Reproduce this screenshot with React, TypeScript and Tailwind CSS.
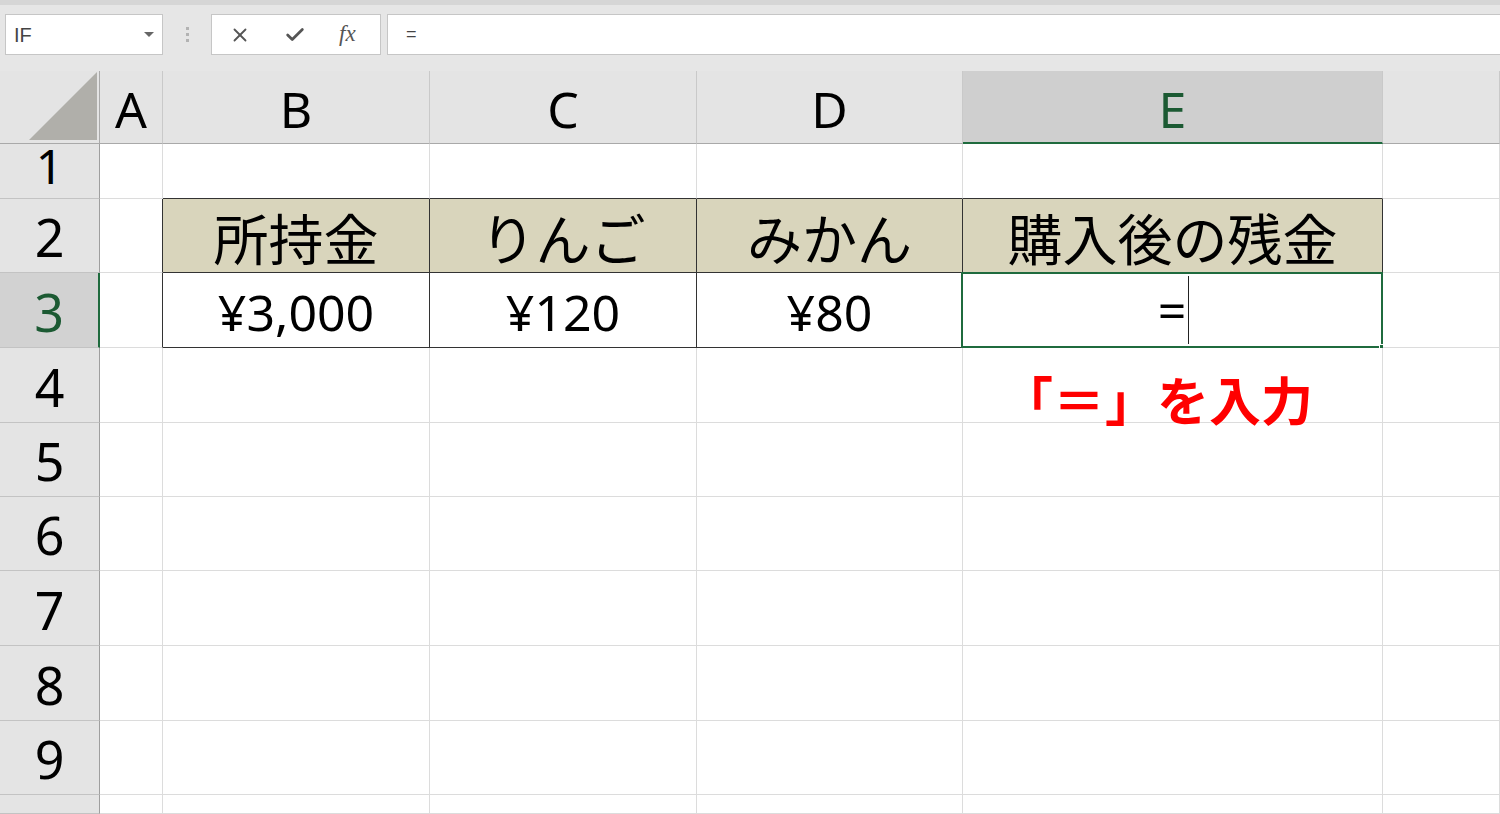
import React from "react";
import { X, Check } from "lucide-react";

const colWidths = "grid-cols-[100px_63px_267px_267px_266px_420px_1fr]";
const rowHeights =
  "grid-rows-[73px_55px_74px_75px_75px_74px_74px_75px_75px_74px_1fr]";

const letters = ["A", "B", "C", "D", "E", "F"];
const rows = [1, 2, 3, 4, 5, 6, 7, 8, 9, 10];

const headers: Record<string, string> = {
  B: "所持金",
  C: "りんご",
  D: "みかん",
  E: "購入後の残金",
};
const values: Record<string, string> = {
  B: "¥3,000",
  C: "¥120",
  D: "¥80",
};

const FormulaBar: React.FC = () => (
  <div className="h-[71px] bg-[#e6e6e6] border-t-[5px] border-[#d6d6d6] flex items-start pt-[9px] pl-[5px]">
    {/* name box */}
    <div className="w-[158px] h-[41px] bg-white border border-[#c6c6c6] flex items-center justify-between pl-[8px] pr-[8px]">
      <span className="text-[20px] text-[#444] font-['Liberation_Sans',sans-serif]">IF</span>
      <span className="w-0 h-0 border-l-[5px] border-r-[5px] border-t-[5px] border-l-transparent border-r-transparent border-t-[#666]" />
    </div>
    <div className="w-[48px] h-[41px] flex flex-col items-center justify-center gap-[3px]">
      <span className="w-[3px] h-[3px] bg-[#b3b3b3]" />
      <span className="w-[3px] h-[3px] bg-[#b3b3b3]" />
      <span className="w-[3px] h-[3px] bg-[#b3b3b3]" />
    </div>
    <div className="w-[170px] h-[41px] bg-white border border-[#c6c6c6] flex items-center pl-[17px] gap-[33px]">
      <X size={22} strokeWidth={2} className="text-[#555]" />
      <Check size={22} strokeWidth={3} className="text-[#555]" />
      <span className="italic text-[23px] text-[#555] font-['Liberation_Serif',serif]">fx</span>
    </div>
    <div className="flex-1 ml-[6px] h-[41px] bg-white border border-[#c6c6c6] border-r-0 flex items-center pl-[18px]">
      <span className="text-[18px] text-[#444] font-['Liberation_Sans',sans-serif]">=</span>
    </div>
  </div>
);

const ColumnHeader: React.FC<{ letter: string }> = ({ letter }) => {
  const active = letter === "E";
  const shown = letter !== "F";
  return (
    <div
      className={`flex items-center justify-center text-[50px] leading-none pt-[4px] border-r border-[#c9c9c9] ${
        active
          ? "bg-[#cfcfcf] text-[#1c5a33] border-b-2 border-b-[#1f6b3e]"
          : "bg-[#e4e4e4] text-black border-b border-b-[#a9a9a9]"
      }`}
    >
      {shown && letter}
    </div>
  );
};

const RowHeader: React.FC<{ n: number }> = ({ n }) => {
  const active = n === 3;
  return (
    <div
      className={`flex items-end justify-center border-b border-[#c3c3c3] ${
        active
          ? "bg-[#d2d2d2] text-[#1c5a33] border-r-2 border-r-[#1f6b3e]"
          : "bg-[#e4e4e4] text-black border-r border-r-[#9f9f9f]"
      }`}
    >
      {/* row 1 is partly scrolled under the column headers */}
      {n === 1 && (
        <div className="h-full flex items-end justify-center text-[48px] leading-[46px] pb-[9px]">
          {n}
        </div>
      )}
      {n > 1 && n < 10 && (
        <div className="h-[74px] shrink-0 flex items-center justify-center text-[52px] leading-none pt-[4px]">
          {n}
        </div>
      )}
    </div>
  );
};

const Cell: React.FC<{ row: number; col: string }> = ({ row, col }) => {
  const inTable = (row === 2 || row === 3) && ["B", "C", "D", "E"].includes(col);
  const aboveTable = row === 1 && ["B", "C", "D", "E"].includes(col);
  const leftOfTable = (row === 2 || row === 3) && col === "A";

  const right = inTable || leftOfTable ? "border-r-[#333]" : "border-r-[#dcdcdc]";
  const bottom = aboveTable || inTable ? "border-b-[#333]" : "border-b-[#dcdcdc]";
  const fill = row === 2 && inTable ? "bg-[#d9d5bc]" : "bg-white";

  return (
    <div className={`relative border-r border-b ${right} ${bottom} ${fill}`}>
      {row === 2 && headers[col] && (
        <div className="h-full flex items-center justify-center text-[55px] leading-none pt-[6px] text-black">
          {headers[col]}
        </div>
      )}
      {row === 3 && values[col] && (
        <div className="h-full flex items-center justify-center text-[50px] leading-none pt-[3px] text-black">
          {values[col]}
        </div>
      )}
      {row === 3 && col === "E" && (
        <>
          <div className="h-full flex items-center justify-center pl-[2px]">
            <span className="text-[50px] leading-none text-black">=</span>
            <span className="w-px h-[68px] bg-[#222] ml-[2px]" />
          </div>
          <div className="absolute -top-px -left-[2px] -right-px -bottom-px border-2 border-[#1f6b3e] pointer-events-none" />
          <div className="absolute -right-[4px] -bottom-[4px] w-[7px] h-[7px] bg-[#1f6b3e] border border-white" />
        </>
      )}
      {row === 4 && col === "E" && (
        <div className="absolute left-[38px] top-[27px] z-10 whitespace-nowrap text-[52px] font-bold leading-none text-[#ff0000] [text-shadow:0_0_2px_#fff]">
          「＝」を入力
        </div>
      )}
    </div>
  );
};

export default function App() {
  return (
    <div className="w-[1500px] h-[814px] overflow-hidden bg-white font-['Noto_Sans','Noto_Sans_CJK_JP',sans-serif]">
      <FormulaBar />
      <div className={`grid ${colWidths} ${rowHeights} h-[743px]`}>
        {/* select-all corner */}
        <div className="bg-[#e4e4e4] border-r border-b border-[#a9a9a9] relative">
          <svg className="absolute right-[2px] bottom-[3px]" width="68" height="68" viewBox="0 0 68 68">
            <polygon points="68,0 68,68 0,68" fill="#b0afaa" />
          </svg>
        </div>
        {letters.map((l) => (
          <ColumnHeader key={l} letter={l} />
        ))}
        {rows.map((r) => (
          <React.Fragment key={r}>
            <RowHeader n={r} />
            {letters.map((l) => (
              <Cell key={l} row={r} col={l} />
            ))}
          </React.Fragment>
        ))}
      </div>
    </div>
  );
}
